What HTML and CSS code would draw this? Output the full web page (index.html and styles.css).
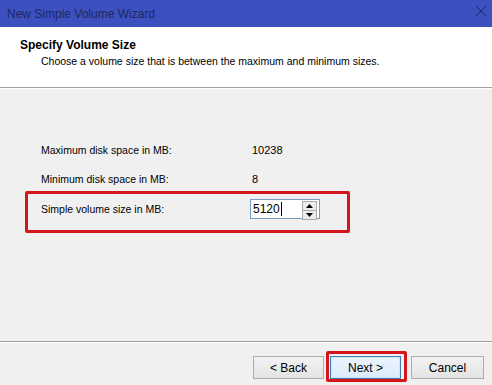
FILE: index.html
```html
<!DOCTYPE html>
<html lang="en">
<head>
  <meta charset="UTF-8">
  <title>New Simple Volume Wizard</title>
  <link rel="stylesheet" href="styles.css">
</head>
<body>
  <div class="wizard">
    <div class="titlebar">
      <span class="title-text">New Simple Volume Wizard</span>
      <svg class="close-icon" width="12" height="12" viewBox="0 0 12 12">
        <path d="M1 1 L11 11 M11 1 L1 11" stroke="#1f2860" stroke-width="1"/>
      </svg>
    </div>

    <div class="header">
      <h1>Specify Volume Size</h1>
      <p>Choose a volume size that is between the maximum and minimum sizes.</p>
    </div>

    <div class="content">
      <div class="row">
        <span class="label">Maximum disk space in MB:</span>
        <span class="value">10238</span>
      </div>
      <div class="row">
        <span class="label">Minimum disk space in MB:</span>
        <span class="value">8</span>
      </div>
      <div class="highlight">
        <div class="row row-input">
          <span class="label">Simple volume size in MB:</span>
          <div class="spin-box">
            <span class="spin-text">5120</span><span class="caret"></span>
            <div class="spin-buttons">
              <div class="spin-btn">
                <svg width="7" height="4" viewBox="0 0 7 4"><path d="M3.5 0 L7 4 L0 4 Z" fill="#000"/></svg>
              </div>
              <div class="spin-btn">
                <svg width="7" height="4" viewBox="0 0 7 4"><path d="M0 0 L7 0 L3.5 4 Z" fill="#000"/></svg>
              </div>
            </div>
          </div>
        </div>
      </div>
    </div>

    <div class="footer">
      <button class="btn btn-back">&lt; Back</button>
      <div class="highlight-btn">
        <button class="btn btn-default">Next &gt;</button>
      </div>
      <button class="btn btn-cancel">Cancel</button>
    </div>
  </div>
</body>
</html>
```

FILE: styles.css
```css
html, body {
  margin: 0;
  padding: 0;
}

body {
  font-family: "Liberation Sans", Arial, sans-serif;
  font-size: 10.5px;
  color: #000;
  background-color: #f0f0f0;
}

.wizard {
  width: 492px;
  height: 385px;
  display: flex;
  flex-direction: column;
  overflow: hidden;
}

.titlebar {
  height: 27px;
  background-color: #3c50c0;
  display: flex;
  align-items: center;
  justify-content: space-between;
  padding: 0 5px 0 7px;
  flex-shrink: 0;
}

.title-text {
  font-size: 12px;
  color: #1f2860;
  padding-top: 1px;
}

.close-icon {
  margin-top: -6px;
}

.header {
  height: 60px;
  background-color: #fff;
  border-bottom: 1px solid #a0a0a0;
  box-shadow: 0 1px 0 #fff;
  flex-shrink: 0;
}

.header h1 {
  margin: 11px 0 0 20px;
  font-size: 12px;
  font-weight: bold;
  line-height: 14px;
}

.header p {
  margin: 3px 0 0 41px;
  font-size: 10.5px;
  line-height: 13px;
}

.content {
  height: 253px;
  padding-top: 52px;
  box-sizing: border-box;
  flex-shrink: 0;
}

.row {
  display: flex;
  align-items: center;
  height: 20px;
  padding-left: 41px;
  margin-bottom: 9px;
}

.label {
  width: 211px;
}

.value {
  font-size: 11px;
}

.highlight {
  width: 325px;
  height: 42px;
  margin-left: 25px;
  margin-top: -7px;
  border: 3px solid #d5141c;
  border-radius: 2px;
  box-sizing: border-box;
  padding-top: 5px;
}

.row-input {
  padding-left: 13px;
  margin-bottom: 0;
}

.label + .spin-box {
  margin-left: -2px;
}

.spin-box {
  width: 70px;
  height: 20px;
  box-sizing: border-box;
  border: 1px solid #7a9cc0;
  background-color: #fff;
  display: flex;
  align-items: center;
  padding-left: 2px;
  position: relative;
}

.spin-text {
  font-size: 12px;
}

.caret {
  display: inline-block;
  width: 1px;
  height: 14px;
  background-color: #000;
  margin-left: 1px;
}

.spin-buttons {
  position: absolute;
  right: 2px;
  top: 1px;
  display: flex;
  flex-direction: column;
}

.spin-btn {
  width: 13px;
  height: 8px;
  border: 1px solid #acacac;
  background-color: #ececec;
  display: flex;
  align-items: center;
  justify-content: center;
  margin-bottom: -1px;
}

.footer {
  height: 42px;
  border-top: 1px solid #a0a0a0;
  box-shadow: inset 0 1px 0 #fff;
  display: flex;
  align-items: flex-start;
  justify-content: flex-end;
  padding: 9px 8px 0 0;
  box-sizing: border-box;
  flex-shrink: 0;
}

.btn {
  width: 71px;
  height: 23px;
  font-family: "Liberation Sans", Arial, sans-serif;
  font-size: 12px;
  color: #000;
  background: linear-gradient(#f2f2f2, #e3e3e3);
  border: 1px solid #acacac;
  padding: 0;
}

.btn-back,
.btn-cancel {
  margin-top: 5px;
}

.btn-back {
  margin-right: 2px;
}

.btn-cancel {
  margin-left: 4px;
  width: 73px;
}

.highlight-btn {
  border: 3px solid #d5141c;
  border-radius: 2px;
  padding: 2px 3px 0 1px;
  height: 31px;
  box-sizing: border-box;
}

.btn-default {
  border-color: #3c7fb1;
  background: linear-gradient(#eaf4fc, #dcecfc);
  box-shadow: inset 0 0 0 1px #cde6f7;
}
```
